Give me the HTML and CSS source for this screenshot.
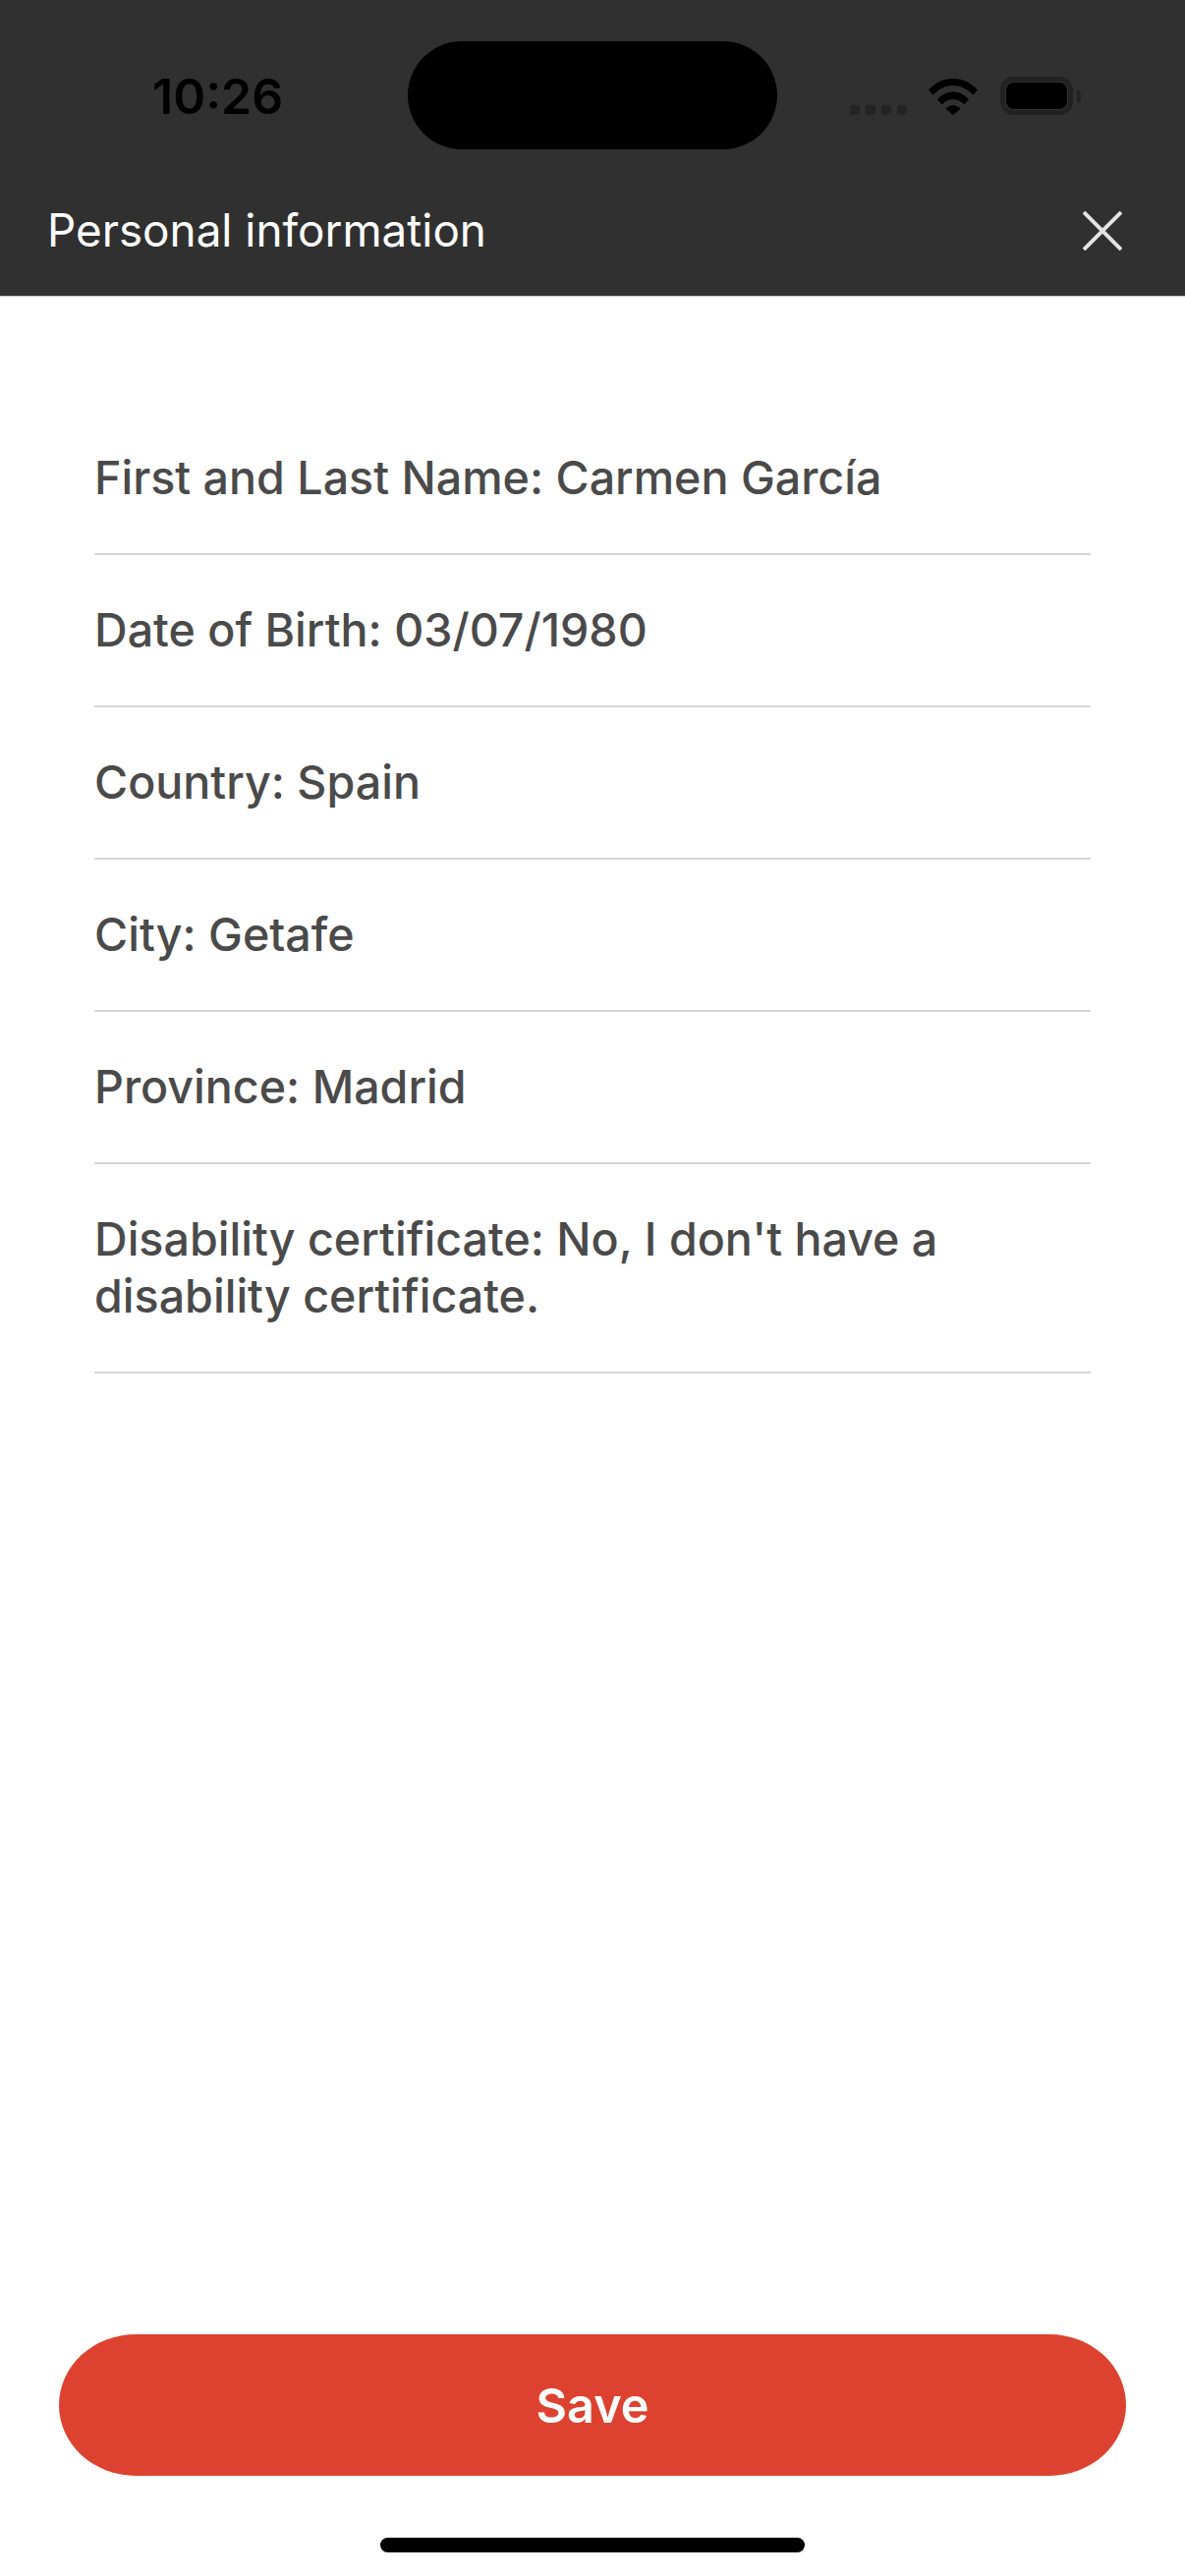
FILE: index.html
```html
<!DOCTYPE html>
<html lang="en">
<head>
  <meta charset="UTF-8" />
  <meta name="viewport" content="width=device-width, initial-scale=1.0" />
  <title>Personal information</title>
  <link rel="stylesheet" href="styles.css">
</head>
<body>
  <div class="phone">
    <div class="header">
      <div class="statusbar">
        <span class="time">10:26</span>
        <div class="island"></div>
        <div class="status-icons">
          <div class="signal"><i></i><i></i><i></i><i></i></div>
          <svg class="wifi" width="50" height="37" viewBox="0 0 50 37">
            <path d="M0 11.500C6.500 4.300 15.300 0 25 0s18.500 4.300 25 11.500l-4.600 5.300C40 10.800 32.900 7 25 7S10 10.800 4.600 16.800z"/>
            <path d="M9 21.200C13.100 16.500 18.700 13.500 25 13.500s11.900 3 16 7.700l-4.700 5.300C33.400 23.100 29.400 21 25 21s-8.400 2.100-11.300 5.500z"/>
            <path d="M17.500 30.700C19.400 28.600 22 27.300 25 27.300s5.600 1.300 7.500 3.400L25 37z"/>
          </svg>
          <div class="battery"><div class="battery-fill"></div></div>
        </div>
      </div>
      <div class="titlebar">
        <h1>Personal information</h1>
        <svg class="close" width="40" height="40" viewBox="0 0 40 40">
          <path d="M1 1L39 39M39 1L1 39"/>
        </svg>
      </div>
    </div>

    <ul class="info">
      <li>First and Last Name: Carmen García</li>
      <li>Date of Birth: 03/07/1980</li>
      <li>Country: Spain</li>
      <li>City: Getafe</li>
      <li>Province: Madrid</li>
      <li>Disability certificate: No, I don't have a disability certificate.</li>
    </ul>

    <div class="footer">
      <button class="save">Save</button>
      <div class="homebar"></div>
    </div>
  </div>
</body>
</html>
```

FILE: styles.css
```css
* {
  box-sizing: border-box;
}
body {
  margin: 0;
  background: #ffffff;
  font-family: Inter, "Noto Sans", sans-serif;
}
.phone {
  width: 1206px;
  height: 2622px;
  display: flex;
  flex-direction: column;
}
.header {
  height: 302px;
  background: #303030;
  padding-top: 42px;
  border-bottom: 1px solid #c4c4c4;
}
.statusbar {
  height: 110px;
  display: flex;
}
.time {
  width: 415px;
  padding: 31px 0 0 155px;
  font-size: 50px;
  line-height: 50px;
  font-weight: 600;
  color: #000000;
}
.island {
  width: 376px;
  height: 110px;
  border-radius: 55px;
  background: #000000;
}
.status-icons {
  display: flex;
  align-items: flex-end;
  padding: 36px 0 35px 74px;
}
.signal {
  display: flex;
  gap: 6px;
  width: 58px;
  margin-right: 22px;
}
.signal i {
  width: 10px;
  height: 10px;
  border-radius: 3px;
  background: #242424;
}
.wifi {
  display: block;
  fill: #000000;
  margin-right: 23px;
}
.battery {
  width: 74px;
  height: 39px;
  border: 5px solid #222222;
  border-radius: 13px;
  position: relative;
  padding: 1px;
}
.battery::after {
  content: "";
  position: absolute;
  left: 73px;
  top: 9px;
  width: 4px;
  height: 12px;
  background: #222222;
  border-radius: 0 6px 6px 0;
}
.battery-fill {
  height: 100%;
  background: #000000;
  border-radius: 8px;
}
.titlebar {
  display: flex;
  align-items: center;
  justify-content: space-between;
  padding: 0 64px 0 48px;
  margin-top: 63px;
  height: 40px;
}
.titlebar h1 {
  margin: 0;
  font-size: 45.800px;
  line-height: 56px;
  font-weight: 400;
  color: #ffffff;
}
.close {
  display: block;
  fill: none;
  stroke: #e4e4e4;
  stroke-width: 4;
}
.info {
  list-style: none;
  margin: 108px 96px 0;
  padding: 0;
  flex: 1;
}
.info li {
  padding: 47px 0 48px;
  font-size: 46.600px;
  line-height: 58px;
  font-weight: 500;
  color: #4a4a4a;
  border-bottom: 2px solid #d6d6d6;
}
.footer {
  padding: 0 60px 24px;
  display: flex;
  flex-direction: column;
  align-items: center;
}
.save {
  width: 1086px;
  height: 144px;
  border: none;
  border-radius: 78px / 72px;
  background: #dd4230;
  color: #ffffff;
  font-family: inherit;
  font-size: 48.500px;
  font-weight: 600;
}
.homebar {
  width: 432px;
  height: 15px;
  margin-top: 63px;
  border-radius: 8px;
  background: #000000;
}
```
